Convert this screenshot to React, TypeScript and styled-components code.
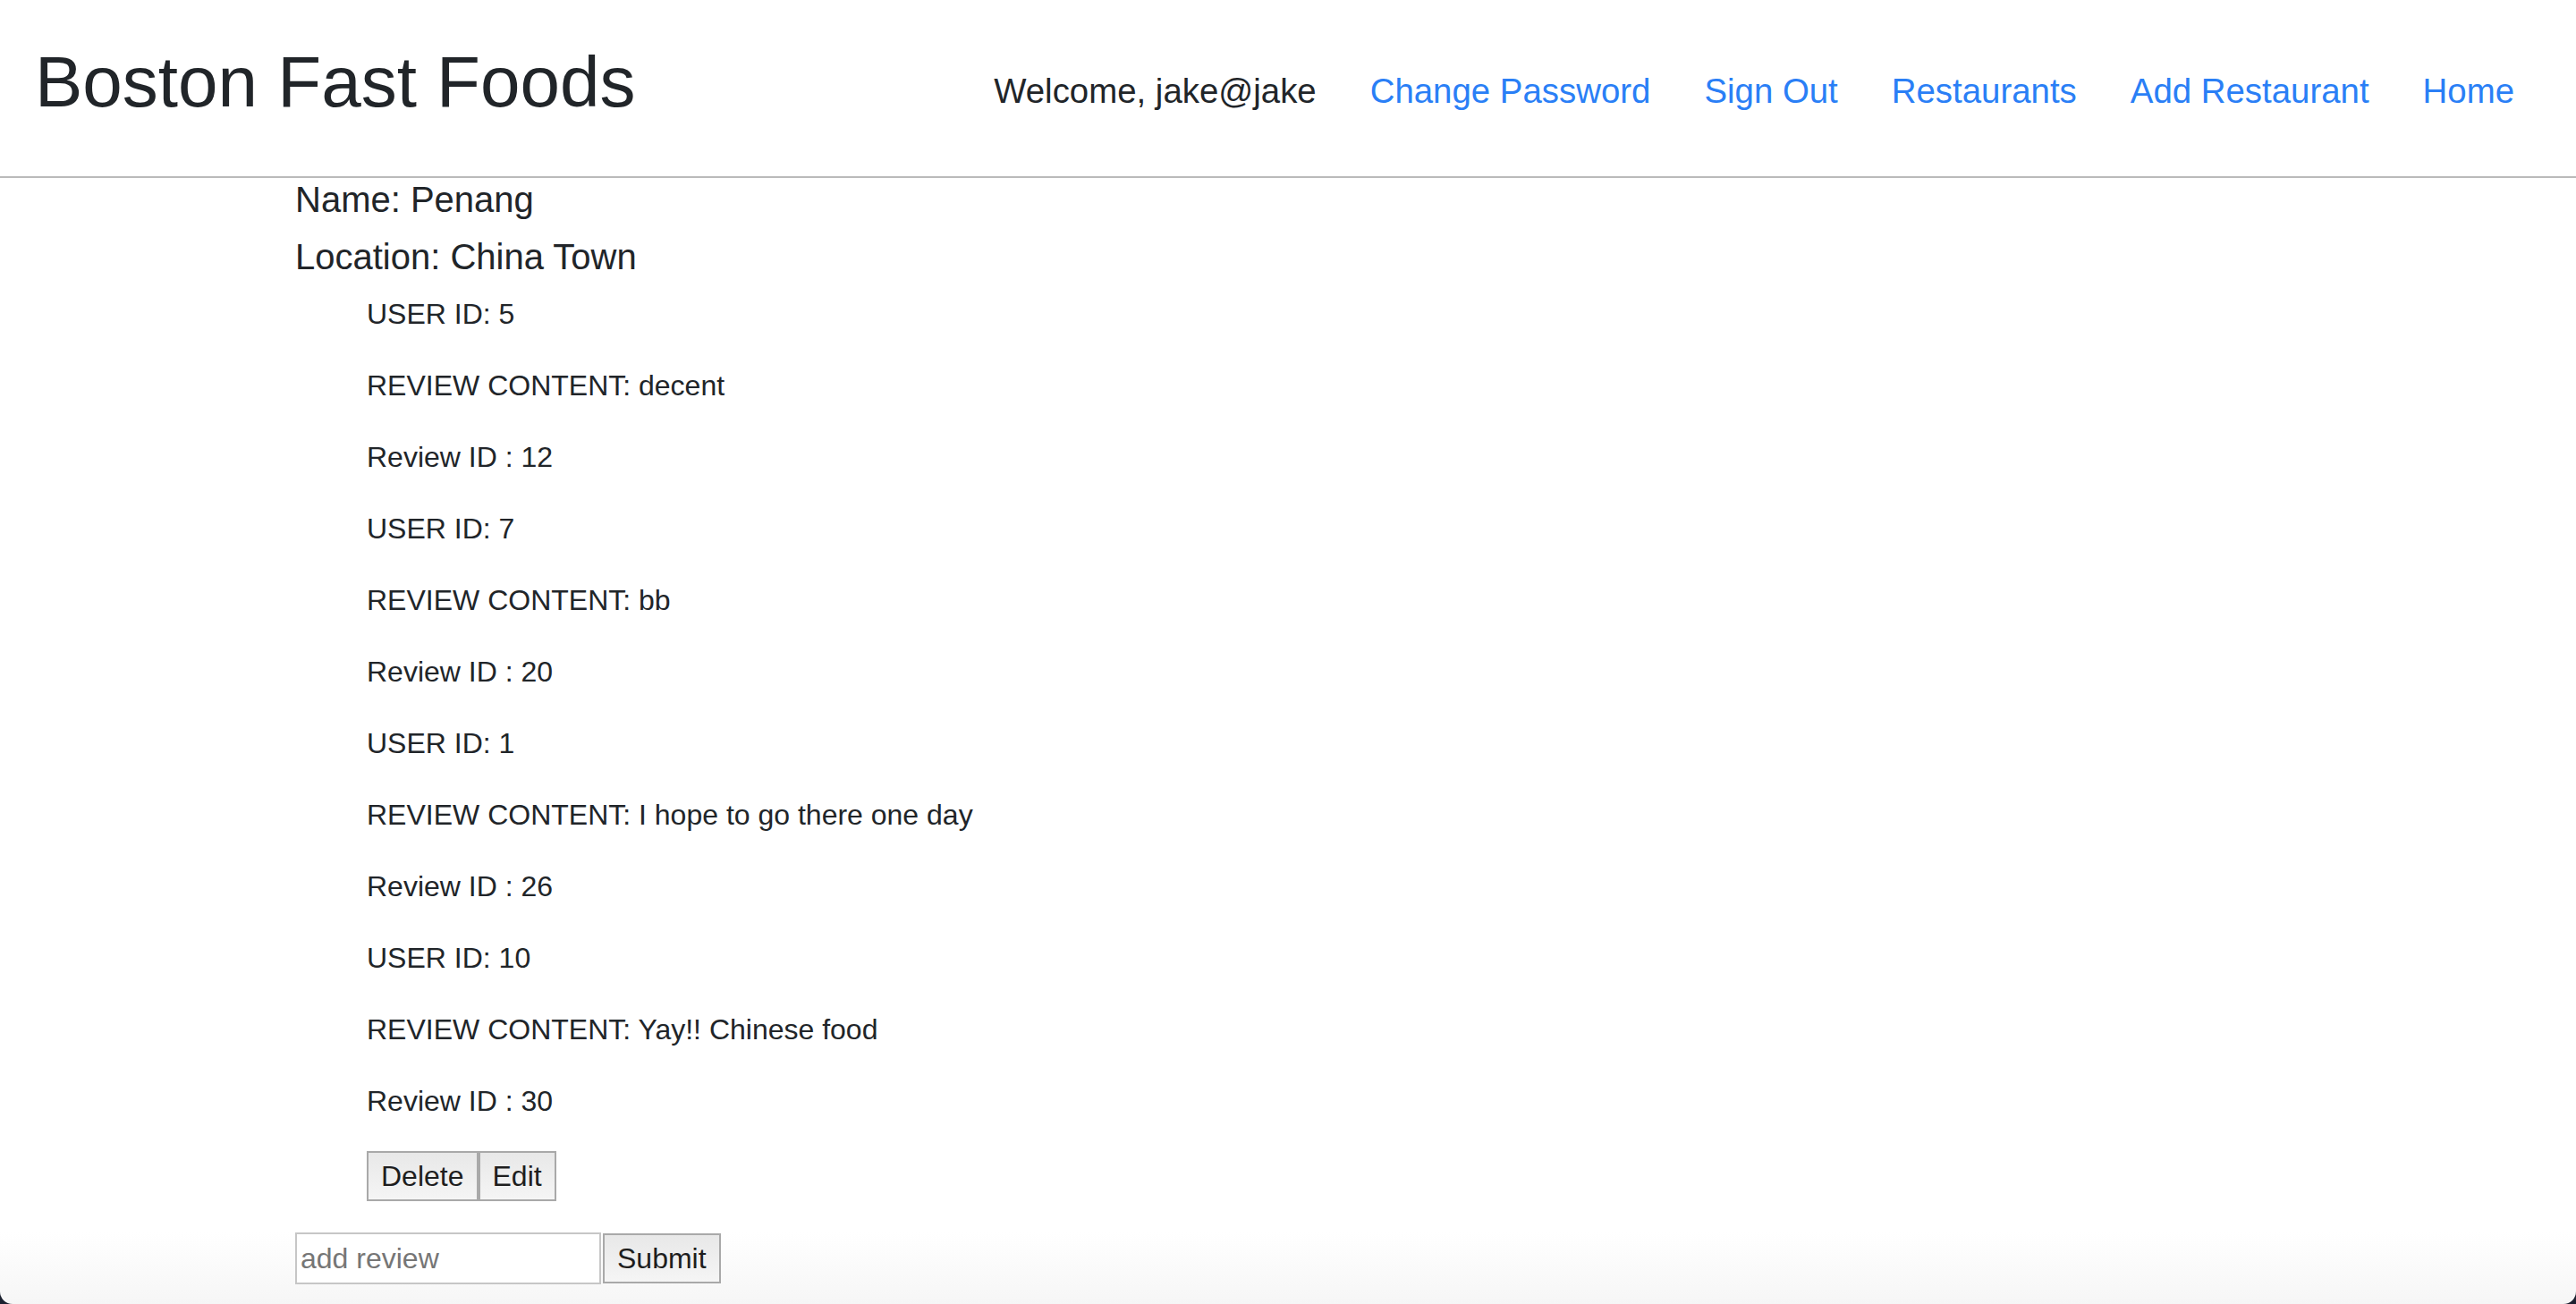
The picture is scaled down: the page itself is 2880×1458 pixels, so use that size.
import React from "react";
import styled, { createGlobalStyle } from "styled-components";

const GlobalStyle = createGlobalStyle`
  html, body {
    margin: 0;
    padding: 0;
    background: #1c2130;
  }
  body {
    font-family: "Liberation Sans", Arial, Helvetica, sans-serif;
    color: #212529;
  }
  * { box-sizing: border-box; }
`;

const Page = styled.div`
  min-height: 100vh;
  background: linear-gradient(to bottom, #ffffff calc(100% - 80px), #f6f6f6 100%);
  border-radius: 0 0 14px 14px;
  overflow: hidden;
`;

const Header = styled.header`
  display: flex;
  align-items: center;
  justify-content: space-between;
  height: 199px;
  padding: 2px 69px 0 39px;
  border-bottom: 2px solid #bababa;
`;

const Title = styled.h1`
  margin: 0 0 16px;
  font-size: 80px;
  line-height: 1.2;
  font-weight: 400;
  color: #212529;
`;

const Nav = styled.nav`
  display: flex;
  align-items: center;
  gap: 60px;
  margin-top: 4px;
  font-size: 38.4px;
  line-height: 1.5;
`;

const Welcome = styled.span`
  color: #212529;
`;

const NavLink = styled.a`
  color: #2a7ff6;
  text-decoration: none;
  cursor: pointer;
`;

const Container = styled.main`
  max-width: 2280px;
  margin: 0 auto;
  padding: 0 30px;
`;

const InfoHeading = styled.h5`
  margin: 0 0 16px;
  font-size: 40px;
  line-height: 1.2;
  font-weight: 400;
`;

const ReviewList = styled.ul`
  list-style: none;
  margin: 0;
  padding: 0 0 0 80px;
`;

const ReviewItem = styled.li``;

const Line = styled.p`
  margin: 0 0 32px;
  font-size: 32px;
  line-height: 48px;
`;

const ButtonRow = styled.div`
  display: flex;
`;

const Button = styled.button`
  font-family: inherit;
  font-size: 32px;
  line-height: 48px;
  padding: 2px 14px;
  margin: 0;
  border: 2px solid #a9a9a9;
  border-radius: 0;
  background: linear-gradient(to bottom, #e8e8e8, #f5f5f5);
  color: #1e1e1e;
  cursor: pointer;
`;

const ReviewForm = styled.form`
  display: flex;
  align-items: center;
  gap: 2px;
  margin: 0;
  padding-top: 35px;
`;

const ReviewInput = styled.input`
  width: 342px;
  height: 58px;
  padding: 2px 4px;
  margin: 0;
  border: 2px solid #c6c6c6;
  background: #ffffff;
  font-family: inherit;
  font-size: 32px;
  line-height: 48px;
  color: #212529;
  outline: none;
  &::placeholder {
    color: #767676;
  }
`;

type Review = { userId: number; content: string; id: number; own?: boolean };

const reviews: Review[] = [
  { userId: 5, content: "decent", id: 12 },
  { userId: 7, content: "bb", id: 20 },
  { userId: 1, content: "I hope to go there one day", id: 26 },
  { userId: 10, content: "Yay!! Chinese food", id: 30, own: true },
];

export default function App() {
  return (
    <>
      <GlobalStyle />
      <Page>
        <Header>
          <Title>Boston Fast Foods</Title>
          <Nav>
            <Welcome>Welcome, jake@jake</Welcome>
            <NavLink>Change Password</NavLink>
            <NavLink>Sign Out</NavLink>
            <NavLink>Restaurants</NavLink>
            <NavLink>Add Restaurant</NavLink>
            <NavLink>Home</NavLink>
          </Nav>
        </Header>
        <Container>
          <InfoHeading>Name: Penang</InfoHeading>
          <InfoHeading>Location: China Town</InfoHeading>
          <ReviewList>
            {reviews.map((r) => (
              <ReviewItem key={r.id}>
                <Line>USER ID: {r.userId}</Line>
                <Line>REVIEW CONTENT: {r.content}</Line>
                <Line>Review ID : {r.id}</Line>
                {r.own && (
                  <ButtonRow>
                    <Button type="button">Delete</Button>
                    <Button type="button">Edit</Button>
                  </ButtonRow>
                )}
              </ReviewItem>
            ))}
          </ReviewList>
          <ReviewForm onSubmit={(e) => e.preventDefault()}>
            <ReviewInput placeholder="add review" />
            <Button type="submit">Submit</Button>
          </ReviewForm>
        </Container>
      </Page>
    </>
  );
}
